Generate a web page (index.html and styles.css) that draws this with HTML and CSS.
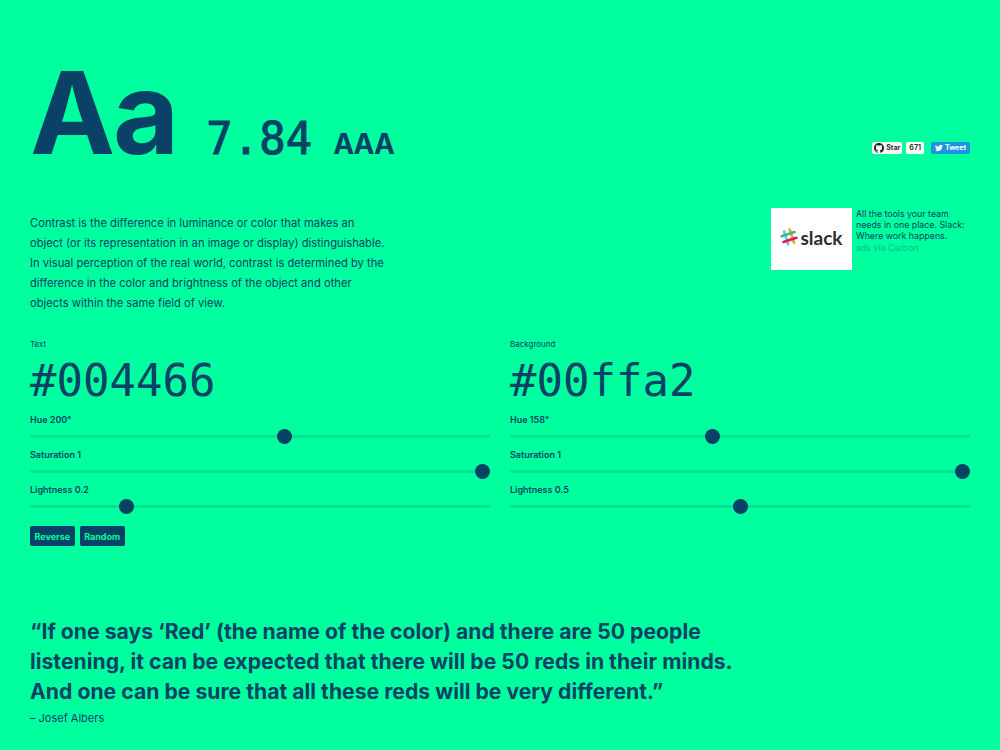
FILE: index.html

```html
<!DOCTYPE html>
<html lang="en">

<head>
    <meta charset="UTF-8">
    <meta name="viewport" content="width=device-width, initial-scale=1.0">
    <title>Colorable</title>
    <link rel="stylesheet" href="styles.css">
</head>

<body>
    <header class="top">
        <div class="score">
            <span class="sample">Aa</span>
            <span class="ratio">7.84</span>
            <span class="level">AAA</span>
        </div>
        <div class="social">
            <a class="gh-btn" href="#">
                <svg class="gh-icon" viewBox="0 0 16 16"><path fill="#222" d="M8 0C3.58 0 0 3.58 0 8c0 3.54 2.29 6.53 5.47 7.59.4.07.55-.17.55-.38 0-.19-.01-.82-.01-1.49-2.01.37-2.53-.49-2.69-.94-.09-.23-.48-.94-.82-1.13-.28-.15-.68-.52-.01-.53.63-.01 1.08.58 1.23.82.72 1.21 1.87.87 2.33.66.07-.52.28-.87.51-1.07-1.78-.2-3.64-.89-3.64-3.95 0-.87.31-1.59.82-2.15-.08-.2-.36-1.02.08-2.12 0 0 .67-.21 2.2.82.64-.18 1.32-.27 2-.27s1.36.09 2 .27c1.53-1.04 2.2-.82 2.2-.82.44 1.1.16 1.92.08 2.12.51.56.82 1.27.82 2.15 0 3.07-1.87 3.75-3.65 3.95.29.25.54.73.54 1.48 0 1.07-.01 1.93-.01 2.2 0 .21.15.46.55.38A8.01 8.01 0 0 0 16 8c0-4.42-3.58-8-8-8z"/></svg>
                Star
            </a>
            <a class="gh-count" href="#">671</a>
            <a class="tw-btn" href="#">
                <svg class="tw-icon" viewBox="0 0 24 24"><path fill="#fff" d="M23.95 4.57a10 10 0 0 1-2.82.77 4.96 4.96 0 0 0 2.16-2.72c-.95.55-2 .96-3.13 1.2a4.92 4.92 0 0 0-8.38 4.48C7.69 8.1 4.07 6.13 1.64 3.16a4.82 4.82 0 0 0-.66 2.47c0 1.71.87 3.2 2.19 4.1a4.9 4.9 0 0 1-2.23-.62v.06a4.92 4.92 0 0 0 3.95 4.83 4.99 4.99 0 0 1-2.21.08 4.94 4.94 0 0 0 4.6 3.42A9.87 9.87 0 0 1 0 19.54a14 14 0 0 0 7.56 2.21c9.05 0 14-7.5 14-13.98 0-.21 0-.42-.02-.63a9.94 9.94 0 0 0 2.46-2.55z"/></svg>
                Tweet
            </a>
        </div>
    </header>

    <section class="intro">
        <p class="intro-text">Contrast is the difference in luminance or color that makes an object (or its representation in an image or display) distinguishable. In visual perception of the real world, contrast is determined by the difference in the color and brightness of the object and other objects within the same field of view.</p>
        <aside class="carbon">
            <a class="carbon-img" href="#">
                <svg class="slack-mark" viewBox="0 0 24 24">
                    <g stroke-width="3.6" stroke-linecap="round" transform="rotate(-18 12 12)">
                        <path stroke="#70cadb" d="M8 3v18"/>
                        <path stroke="#e8a723" d="M16 3v18"/>
                        <path stroke="#3eb890" d="M3 8h18"/>
                        <path stroke="#e01765" d="M3 16h18"/>
                    </g>
                </svg>
                <span class="slack-word">slack</span>
            </a>
            <div class="carbon-copy">
                <p class="carbon-text">All the tools your team needs in one place. Slack: Where work happens.</p>
                <p class="carbon-via">ads via Carbon</p>
            </div>
        </aside>
    </section>

    <section class="controls">
        <div class="col">
            <label class="field-label">Text</label>
            <div class="hex">#004466</div>
            <label class="slider-label">Hue 200°</label>
            <input class="slider" type="range" min="0" max="360" value="200">
            <label class="slider-label">Saturation 1</label>
            <input class="slider" type="range" min="0" max="1" step="0.01" value="1">
            <label class="slider-label">Lightness 0.2</label>
            <input class="slider" type="range" min="0" max="1" step="0.01" value="0.2">
            <div class="buttons">
                <button class="btn">Reverse</button>
                <button class="btn">Random</button>
            </div>
        </div>
        <div class="col">
            <label class="field-label">Background</label>
            <div class="hex">#00ffa2</div>
            <label class="slider-label">Hue 158°</label>
            <input class="slider" type="range" min="0" max="360" value="158">
            <label class="slider-label">Saturation 1</label>
            <input class="slider" type="range" min="0" max="1" step="0.01" value="1">
            <label class="slider-label">Lightness 0.5</label>
            <input class="slider" type="range" min="0" max="1" step="0.01" value="0.5">
        </div>
    </section>

    <blockquote class="quote">
        <p class="quote-text">“If one says ‘Red’ (the name of the color) and there are 50 people listening, it can be expected that there will be 50 reds in their minds. And one can be sure that all these reds will be very different.”</p>
        <cite class="quote-by">– Josef Albers</cite>
    </blockquote>
</body>
</html>
```

FILE: styles.css

```css
body {
    font-family: Inter, "Liberation Sans", sans-serif;
    margin: 0;
    padding: 0 30px;
    height: 750px;
    overflow: hidden;
    box-sizing: border-box;
    background-color: #00ff9f;
    color: #0a4166;
}

a {
    text-decoration: none;
}

/* top row */
.top {
    display: flex;
    justify-content: space-between;
    align-items: flex-end;
    height: 182px;
}

.score {
    display: flex;
    align-items: baseline;
    height: 138px;
}

.sample {
    font-size: 114px;
    font-weight: 700;
    line-height: 138px;
    letter-spacing: -2px;
}

.ratio {
    font-family: "DejaVu Sans Mono", monospace;
    font-size: 44px;
    font-weight: 400;
    -webkit-text-stroke: 1px #0a4166;
    margin-left: 29px;
}

.level {
    font-size: 28px;
    font-weight: 700;
    letter-spacing: -1px;
    margin-left: 21px;
}

.social {
    display: flex;
    align-items: center;
    gap: 3px;
    height: 13px;
    margin-bottom: 28px;
}

.gh-btn,
.gh-count,
.tw-btn {
    display: flex;
    align-items: center;
    height: 12px;
    border-radius: 2px;
    font-size: 7px;
    font-weight: 700;
    line-height: 12px;
}

.gh-btn,
.gh-count {
    background-color: #f4f4f4;
    color: #333;
}

.gh-btn {
    gap: 2px;
    padding: 0 2px;
}

.gh-count {
    background-color: #fff;
    padding: 0 3px;
    margin-left: 1px;
}

.tw-btn {
    gap: 2px;
    background-color: #1b95e0;
    color: #fff;
    padding: 0 4px;
    margin-left: 4px;
}

.gh-icon {
    width: 10px;
    height: 10px;
}

.tw-icon {
    width: 8px;
    height: 8px;
}

/* intro and ad */
.intro {
    display: flex;
    justify-content: space-between;
    align-items: flex-start;
    margin-top: 26px;
    height: 127px;
}

.intro-text {
    width: 356px;
    margin: 5px 0 0;
    font-size: 11.2px;
    line-height: 20px;
}

.carbon {
    display: flex;
    gap: 4px;
    width: 199px;
}

.carbon-img {
    display: flex;
    align-items: center;
    justify-content: center;
    gap: 2px;
    flex: none;
    box-sizing: border-box;
    width: 81px;
    height: 62px;
    padding-bottom: 4px;
    background-color: #fff;
}

.slack-mark {
    width: 18px;
    height: 18px;
}

.slack-word {
    font-family: Lato, sans-serif;
    font-size: 19px;
    font-weight: 700;
    color: #2d2d33;
}

.carbon-text {
    margin: 0;
    font-size: 8.8px;
    line-height: 11px;
}

.carbon-via {
    margin: 1px 0 0;
    font-size: 8.8px;
    line-height: 12px;
    opacity: 0.35;
}

/* colour controls */
.controls {
    display: grid;
    grid-template-columns: 1fr 1fr;
    column-gap: 20px;
    margin-top: 3px;
}

.col {
    display: flex;
    flex-direction: column;
    align-items: flex-start;
}

.field-label {
    font-size: 8px;
    line-height: 12px;
}

.hex {
    font-family: "DejaVu Sans Mono", monospace;
    font-size: 44px;
    line-height: 60px;
    margin: 1px 0 2px;
}

.slider-label {
    font-size: 9px;
    font-weight: 600;
    line-height: 12px;
    margin-top: 1px;
}

.slider {
    -webkit-appearance: none;
    appearance: none;
    display: block;
    width: 100%;
    height: 16px;
    margin: 2px 0 4px;
    padding: 0;
    background: transparent;
}

.slider::-webkit-slider-runnable-track {
    height: 3px;
    background-color: rgba(10, 65, 102, 0.15);
    border-radius: 2px;
}

.slider::-webkit-slider-thumb {
    -webkit-appearance: none;
    appearance: none;
    width: 15px;
    height: 15px;
    margin-top: -6px;
    border-radius: 50%;
    background-color: #0a4166;
}

.buttons {
    display: flex;
    gap: 5px;
    margin-top: 8px;
}

.btn {
    height: 20px;
    padding: 0 4.5px;
    border: 0;
    border-radius: 2px;
    background-color: #0a4166;
    color: #00ff9f;
    font-family: inherit;
    font-size: 9px;
    font-weight: 700;
}

/* quote */
.quote {
    margin: 70px 0 0;
    width: 720px;
}

.quote-text {
    margin: 0;
    font-size: 21.2px;
    font-weight: 700;
    line-height: 30px;
}

.quote-by {
    display: block;
    margin-top: 2px;
    font-size: 11px;
    font-style: normal;
    line-height: 20px;
}
```
